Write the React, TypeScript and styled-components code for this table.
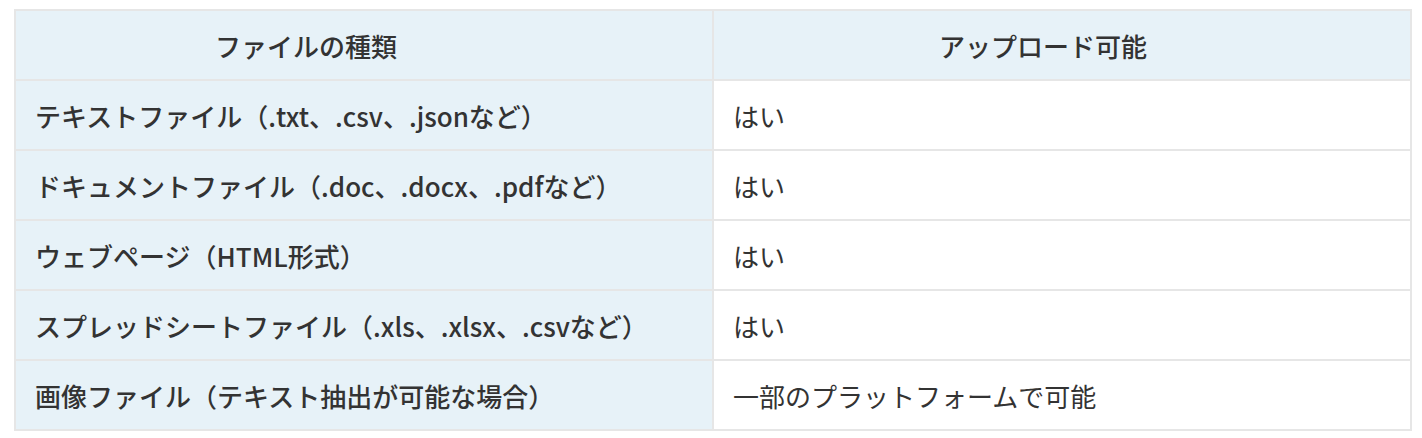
import React from 'react';
import styled, { createGlobalStyle } from 'styled-components';

interface Row {
  kind: string;
  upload: string;
}

const rows: Row[] = [
  { kind: 'テキストファイル（.txt、.csv、.jsonなど）', upload: 'はい' },
  { kind: 'ドキュメントファイル（.doc、.docx、.pdfなど）', upload: 'はい' },
  { kind: 'ウェブページ（HTML形式）', upload: 'はい' },
  { kind: 'スプレッドシートファイル（.xls、.xlsx、.csvなど）', upload: 'はい' },
  { kind: '画像ファイル（テキスト抽出が可能な場合）', upload: '一部のプラットフォームで可能' },
];

const GlobalStyle = createGlobalStyle`
  body {
    margin: 0;
    background: #ffffff;
    font-family: "Noto Sans CJK JP", "Noto Sans", sans-serif;
    color: #333333;
  }
`;

const Page = styled.div`
  padding: 9px 10px 0 14px;
`;

const Table = styled.table`
  width: 1398px;
  border-collapse: collapse;
  table-layout: fixed;
  border: 2px solid #e6e6e6;
`;

// header labels sit a little left of the column centre in the original
const HeadCell = styled.th<{ $padRight: number }>`
  height: 68px;
  padding: 0 ${({ $padRight }) => $padRight}px 0 20px;
  background: #e7f2f8;
  border: 2px solid #e6e6e6;
  font-size: 26px;
  font-weight: 500;
  text-align: center;
  color: #333333;
`;

const Cell = styled.td<{ $key?: boolean }>`
  height: 68px;
  padding: 0 19px;
  background: ${({ $key }) => ($key ? '#e7f2f8' : '#ffffff')};
  border: 2px solid #e6e6e6;
  font-size: 26px;
  font-weight: ${({ $key }) => ($key ? 500 : 400)};
  color: #333333;
  white-space: nowrap;
`;

export default function App() {
  return (
    <Page>
      <GlobalStyle />
      <Table>
        <thead>
          <tr>
            <HeadCell $padRight={136}>ファイルの種類</HeadCell>
            <HeadCell $padRight={58}>アップロード可能</HeadCell>
          </tr>
        </thead>
        <tbody>
          {rows.map((r) => (
            <tr key={r.kind}>
              <Cell $key>{r.kind}</Cell>
              <Cell>{r.upload}</Cell>
            </tr>
          ))}
        </tbody>
      </Table>
    </Page>
  );
}
